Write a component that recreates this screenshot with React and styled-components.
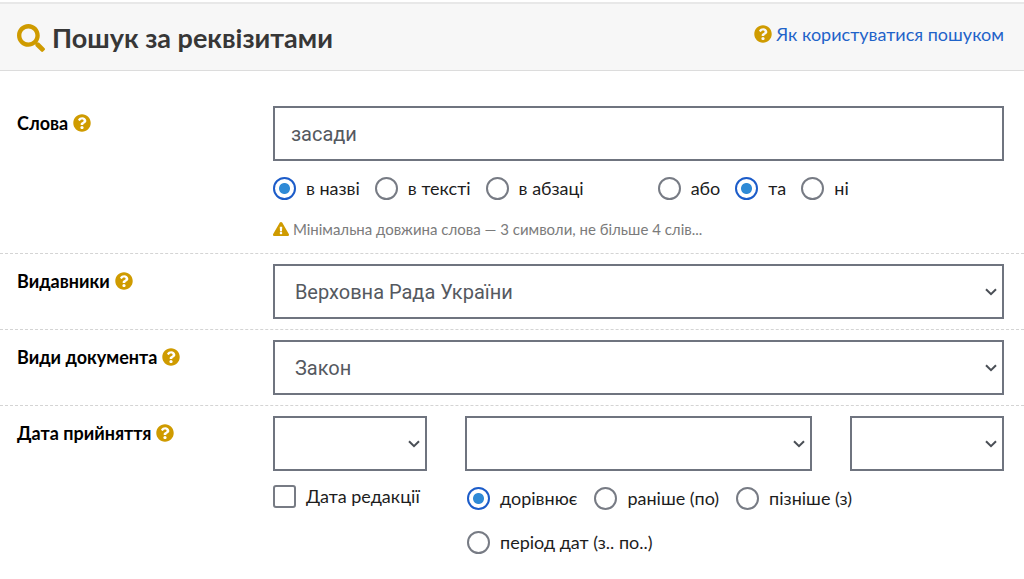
import React from "react";
import styled, { createGlobalStyle } from "styled-components";
import { FaSearch, FaQuestionCircle, FaExclamationTriangle } from "react-icons/fa";

const GlobalStyle = createGlobalStyle`
  *, *::before, *::after { box-sizing: border-box; }
  body {
    margin: 0;
    background: #ffffff;
    color: #1d1d1d;
    font-family: Lato, "Open Sans", sans-serif;
    font-size: 18px;
    line-height: 24px;
  }
`;

const Page = styled.main`
  padding-top: 2px;
`;

const Header = styled.header`
  display: flex;
  justify-content: space-between;
  align-items: flex-start;
  padding: 16px 20px 14px 17px;
  background: #f7f7f7;
  border-top: 2px solid #e8e8e8;
  border-bottom: 1px solid #dcdcdc;
`;

const Title = styled.h1`
  display: flex;
  align-items: center;
  gap: 7px;
  margin: 0;
  font-size: 27px;
  line-height: 36px;
  font-weight: 700;
  color: #373737;

  svg { color: #cf9b00; }
`;

const HelpLink = styled.a`
  display: flex;
  align-items: center;
  gap: 4px;
  line-height: 28px;
  color: #1f63c9;
  text-decoration: none;

  svg { color: #cf9b00; }
`;

const Row = styled.div`
  display: grid;
  grid-template-columns: minmax(0, 7fr) minmax(0, 20fr);
  padding: ${(p) => (p.$first ? "35px 20px 13px 17px" : "10px 20px 10px 17px")};
  border-top: ${(p) => (p.$first ? "none" : "1px dashed #d4d4d4")};
`;

const RowLabel = styled.div`
  display: flex;
  align-items: center;
  gap: 5px;
  height: 33px;
  font-weight: 700;
  color: #000000;
`;

const HelpButton = styled.button`
  display: flex;
  padding: 0;
  border: 0;
  background: none;
  color: #cf9b00;
`;

const TextInput = styled.input`
  display: block;
  width: 100%;
  height: 55px;
  padding: 0 16px;
  border: 2px solid #6f747f;
  border-radius: 0;
  background: #ffffff;
  color: #55595f;
  font: 20px/24px Roboto, sans-serif;
`;

const SelectBox = styled.div`
  display: grid;
  align-items: center;

  > * { grid-area: 1 / 1; }

  svg {
    justify-self: end;
    margin-right: 7px;
    pointer-events: none;
  }
`;

const Select = styled.select`
  width: 100%;
  height: 55px;
  padding: 0 28px 0 20px;
  appearance: none;
  border: 2px solid #6f747f;
  border-radius: 0;
  background: #ffffff;
  color: #55595f;
  font: 20px/24px Roboto, sans-serif;
`;

const ChoiceLine = styled.div`
  display: flex;
  gap: 74px;
  margin-top: 15px;
`;

const ChoiceGroup = styled.div`
  display: flex;
  flex-wrap: wrap;
  gap: ${(p) => (p.$wide ? "20px 17px" : "20px 15px")};
`;

const Choice = styled.label`
  display: flex;
  align-items: center;
  gap: 10px;
  white-space: nowrap;
`;

const Radio = styled.input`
  appearance: none;
  width: 23px;
  height: 23px;
  margin: 0;
  border: 2px solid #777b84;
  border-radius: 50%;
  background: #ffffff;

  &:checked {
    border-color: #1c5cc9;
    background: radial-gradient(circle, #2f8ad6 5px, #ffffff 6px);
  }
`;

const Checkbox = styled.input`
  appearance: none;
  width: 23px;
  height: 23px;
  margin: 0;
  border: 2px solid #777b84;
  border-radius: 3px;
  background: #ffffff;
`;

const Hint = styled.p`
  display: flex;
  align-items: center;
  gap: 4px;
  margin: 18px 0 0;
  font-size: 15px;
  line-height: 22px;
  color: #7b7b7b;

  svg { color: #cf9b00; }
`;

const DateGrid = styled.div`
  display: grid;
  grid-template-columns: 4fr 9fr 4fr;
  column-gap: 38px;
`;

const DateMode = styled.div`
  grid-column: 2 / 4;
  margin-top: 15px;
  padding-left: 2px;
`;

const DateRevision = styled.div`
  margin-top: 13px;
`;

function Chevron() {
  return (
    <svg width="12" height="8" viewBox="0 0 12 8" fill="none" stroke="#4a4f56" strokeWidth="2" aria-hidden="true">
      <path d="M1 1.2 L6 6.2 L11 1.2" />
    </svg>
  );
}

function Dropdown({ id, label, options }) {
  return (
    <SelectBox>
      <Select id={id} aria-label={label} defaultValue={options[0]}>
        {options.map((option) => (
          <option key={option}>{option}</option>
        ))}
      </Select>
      <Chevron />
    </SelectBox>
  );
}

function RadioGroup({ name, label, options, selected, wide }) {
  return (
    <ChoiceGroup role="radiogroup" aria-label={label} $wide={wide}>
      {options.map((option) => (
        <Choice key={option}>
          <Radio type="radio" name={name} value={option} defaultChecked={option === selected} />
          {option}
        </Choice>
      ))}
    </ChoiceGroup>
  );
}

function Field({ label, htmlFor, first, children }) {
  return (
    <Row $first={first}>
      <RowLabel>
        <label htmlFor={htmlFor}>{label}</label>
        <HelpButton type="button" aria-label={`Довідка: ${label}`}>
          <FaQuestionCircle size={18} />
        </HelpButton>
      </RowLabel>
      <div>{children}</div>
    </Row>
  );
}

export default function App() {
  return (
    <Page>
      <GlobalStyle />
      <Header>
        <Title>
          <FaSearch size={28} />
          Пошук за реквізитами
        </Title>
        <HelpLink href="#help">
          <FaQuestionCircle size={18} />
          Як користуватися пошуком
        </HelpLink>
      </Header>
      <form>
        <Field label="Слова" htmlFor="words" first>
          <TextInput id="words" type="text" defaultValue="засади" />
          <ChoiceLine>
            <RadioGroup name="scope" label="Де шукати" options={["в назві", "в тексті", "в абзаці"]} selected="в назві" />
            <RadioGroup name="logic" label="Умова" options={["або", "та", "ні"]} selected="та" />
          </ChoiceLine>
          <Hint>
            <FaExclamationTriangle size={16} />
            Мінімальна довжина слова — 3 символи, не більше 4 слів...
          </Hint>
        </Field>
        <Field label="Видавники" htmlFor="publisher">
          <Dropdown id="publisher" options={["Верховна Рада України"]} />
        </Field>
        <Field label="Види документа" htmlFor="kind">
          <Dropdown id="kind" options={["Закон"]} />
        </Field>
        <Field label="Дата прийняття" htmlFor="day">
          <DateGrid>
            <Dropdown id="day" options={[""]} />
            <Dropdown id="month" label="Місяць" options={[""]} />
            <Dropdown id="year" label="Рік" options={[""]} />
            <DateRevision>
              <Choice>
                <Checkbox type="checkbox" />
                Дата редакції
              </Choice>
            </DateRevision>
            <DateMode>
              <RadioGroup
                name="date-mode"
                label="Умова для дати"
                options={["дорівнює", "раніше (по)", "пізніше (з)", "період дат (з.. по..)"]}
                selected="дорівнює"
                wide
              />
            </DateMode>
          </DateGrid>
        </Field>
      </form>
    </Page>
  );
}
